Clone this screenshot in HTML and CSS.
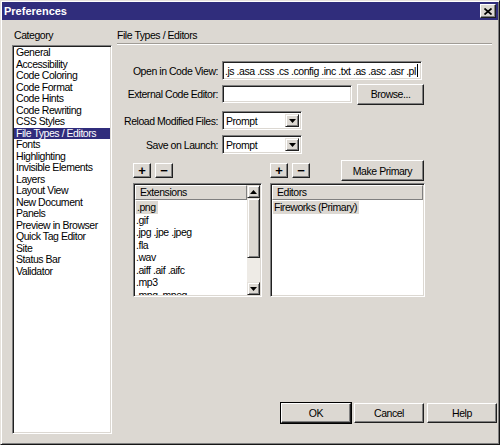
FILE: index.html
```html
<!DOCTYPE html>
<html>
<head>
<meta charset="utf-8">
<title>Preferences</title>
<link rel="stylesheet" href="styles.css">
</head>
<body>
<div class="window">
  <div class="titlebar">
    <span class="title">Preferences</span>
    <span class="close"><svg width="8" height="7" viewBox="0 0 8 7"><path d="M0.5 0.5L7.5 6.5M7.5 0.5L0.5 6.5" stroke="#000" stroke-width="1.7"/></svg></span>
  </div>
  <div class="main">
    <div class="left">
      <div class="cat-label">Category</div>
      <ul class="cat-list">
        <li>General</li>
        <li>Accessibility</li>
        <li>Code Coloring</li>
        <li>Code Format</li>
        <li>Code Hints</li>
        <li>Code Rewriting</li>
        <li>CSS Styles</li>
        <li class="sel">File Types / Editors</li>
        <li>Fonts</li>
        <li>Highlighting</li>
        <li>Invisible Elements</li>
        <li>Layers</li>
        <li>Layout View</li>
        <li>New Document</li>
        <li>Panels</li>
        <li>Preview in Browser</li>
        <li>Quick Tag Editor</li>
        <li>Site</li>
        <li>Status Bar</li>
        <li>Validator</li>
      </ul>
    </div>
    <div class="right">
      <div class="heading">File Types / Editors</div>
      <div class="sep"></div>
      <div class="form">
        <div class="row r1">
          <span class="lbl">Open in Code View:</span>
          <div class="field f-code"><span class="val">.js .asa .css .cs .config .inc .txt .as .asc .asr .pl</span><span class="caret"></span></div>
        </div>
        <div class="row r2">
          <span class="lbl">External Code Editor:</span>
          <div class="field f-ext"></div>
          <button class="btn browse">Browse...</button>
        </div>
        <div class="row r3">
          <span class="lbl">Reload Modified Files:</span>
          <div class="field select"><span class="val">Prompt</span><span class="drop"><svg width="7" height="4" viewBox="0 0 7 4"><path d="M0 0h7L3.5 4z" fill="#000"/></svg></span></div>
        </div>
        <div class="row r4">
          <span class="lbl">Save on Launch:</span>
          <div class="field select"><span class="val">Prompt</span><span class="drop"><svg width="7" height="4" viewBox="0 0 7 4"><path d="M0 0h7L3.5 4z" fill="#000"/></svg></span></div>
        </div>
      </div>
      <div class="tools">
        <div class="tgroup tleft">
          <button class="btn pm">+</button>
          <button class="btn pm">&minus;</button>
        </div>
        <div class="tgroup tright">
          <button class="btn pm">+</button>
          <button class="btn pm">&minus;</button>
          <button class="btn primary">Make Primary</button>
        </div>
      </div>
      <div class="lists">
        <div class="listbox lb-ext">
          <div class="lb-body">
            <div class="lb-head">Extensions</div>
            <div class="lb-item"><span class="hl">.png</span></div>
            <div class="lb-item">.gif</div>
            <div class="lb-item">.jpg .jpe .jpeg</div>
            <div class="lb-item">.fla</div>
            <div class="lb-item">.wav</div>
            <div class="lb-item">.aiff .aif .aifc</div>
            <div class="lb-item">.mp3</div>
            <div class="lb-item">.mpg .mpeg</div>
          </div>
          <div class="scrollbar">
            <div class="sb-btn"><svg width="7" height="4" viewBox="0 0 7 4"><path d="M0 4h7L3.5 0z" fill="#000"/></svg></div>
            <div class="sb-thumb"></div>
            <div class="sb-track"></div>
            <div class="sb-btn"><svg width="7" height="4" viewBox="0 0 7 4"><path d="M0 0h7L3.5 4z" fill="#000"/></svg></div>
          </div>
        </div>
        <div class="listbox lb-ed">
          <div class="lb-body">
            <div class="lb-head">Editors</div>
            <div class="lb-item"><span class="hl">Fireworks (Primary)</span></div>
          </div>
        </div>
      </div>
      <div class="buttons">
        <button class="btn dlg default">OK</button>
        <button class="btn dlg">Cancel</button>
        <button class="btn dlg">Help</button>
      </div>
    </div>
  </div>
</div>
</body>
</html>
```
FILE: styles.css
```css
html, body {
  margin: 0;
  padding: 0;
  background: #dcd8d2;
}

body {
  font-family: "Liberation Sans", Arial, sans-serif;
  font-size: 10.5px;
  letter-spacing: -0.45px;
  color: #000;
}

.window {
  width: 500px;
  height: 445px;
  box-sizing: border-box;
  border: 1px solid;
  border-color: #e6e2dc #161616 #161616 #e6e2dc;
  padding: 1px;
  background: #dcd8d2;
  box-shadow: inset 1px 1px #fff, inset -1px -1px #808080;
  display: flex;
  flex-direction: column;
}

.titlebar {
  height: 18px;
  flex: none;
  background: #302d7c;
  display: flex;
  align-items: center;
  justify-content: space-between;
  padding: 0 2px 0 2px;
  color: #fff;
  font-weight: bold;
  font-size: 11px;
  letter-spacing: 0;
}

.close {
  width: 14px;
  height: 12px;
  background: #dcd8d2;
  border: 1px solid;
  border-color: #fff #202020 #202020 #fff;
  box-shadow: inset -1px -1px #808080;
  display: flex;
  align-items: center;
  justify-content: center;
}

.main {
  flex: 1;
  display: flex;
  gap: 5px;
  padding: 0 0 9px 10px;
  min-height: 0;
}

.left {
  width: 100px;
  display: flex;
  flex-direction: column;
}

.cat-label {
  margin: 9px 0 3px 2px;
  line-height: 13px;
  height: 13px;
}

.cat-list {
  flex: 1;
  margin: 0;
  padding: 1px;
  list-style: none;
  background: #fff;
  border: 1px solid;
  border-color: #808080 #fff #fff #808080;
  box-shadow: inset 1px 1px #202020, inset -1px -1px #dcd8d2;
}

.cat-list li {
  line-height: 11.5px;
  height: 11.5px;
  padding-left: 2px;
  white-space: nowrap;
}

.cat-list li.sel {
  background: #302d7c;
  color: #fff;
}

.right {
  flex: 1;
  display: flex;
  flex-direction: column;
  padding-right: 1px;
}

.heading {
  margin-top: 9px;
  line-height: 13px;
  height: 13px;
}

.sep {
  height: 0;
  border-top: 1px solid #a09c96;
  border-bottom: 1px solid #fff;
  margin: 1px 5px 0 0;
}

.form {
  margin-top: 16px;
}

.row {
  display: flex;
  align-items: center;
}

.lbl {
  width: 101px;
  padding-right: 4px;
  text-align: right;
  white-space: nowrap;
  flex: none;
}

.r1 { height: 19px; }
.r2 { height: 22px; margin-top: 3px; }
.r3 { height: 19px; margin-top: 6px; }
.r4 { height: 19px; margin-top: 5px; }

.field {
  box-sizing: border-box;
  background: #fff;
  border: 1px solid;
  border-color: #808080 #fff #fff #808080;
  box-shadow: inset 1px 1px #202020, inset -1px -1px #dcd8d2;
  display: flex;
  align-items: center;
  overflow: hidden;
  white-space: nowrap;
}

.field .val {
  padding-left: 3px;
}

.f-code {
  width: 200px;
  height: 19px;
}

.f-code .val {
  padding-left: 2px;
}

.caret {
  width: 1px;
  height: 13px;
  background: #000;
  flex: none;
  margin-left: 1px;
}

.f-ext {
  width: 130px;
  height: 18px;
}

.select {
  width: 80px;
  height: 19px;
  justify-content: space-between;
  padding-right: 2px;
}

.drop {
  width: 14px;
  height: 13px;
  box-sizing: border-box;
  background: #dcd8d2;
  border: 1px solid;
  border-color: #e6e2dc #202020 #202020 #e6e2dc;
  box-shadow: inset 1px 1px #fff, inset -1px -1px #808080;
  display: flex;
  align-items: center;
  justify-content: center;
}

.btn {
  font-family: inherit;
  font-size: 10.5px;
  letter-spacing: -0.45px;
  color: #000;
  background: #dcd8d2;
  border: 1px solid;
  border-color: #fff #202020 #202020 #fff;
  box-shadow: inset -1px -1px #808080;
  padding: 0;
  margin: 0;
  box-sizing: border-box;
  display: flex;
  align-items: center;
  justify-content: center;
}

.browse {
  width: 67px;
  height: 21px;
  margin-left: 5px;
}

.tools {
  display: flex;
  margin-top: 6px;
  height: 21px;
  padding-left: 16px;
}

.tgroup {
  display: flex;
  align-items: flex-start;
  gap: 4px;
}

.tleft { width: 129px; }

.tright {
  width: 155px;
  margin-left: 8px;
}

.pm {
  width: 18px;
  height: 15px;
  margin-top: 3px;
  font-weight: bold;
  font-size: 13px;
  line-height: 13px;
  letter-spacing: 0;
}

.primary {
  width: 83px;
  height: 21px;
  margin-left: auto;
  margin-right: 1px;
}

.lists {
  display: flex;
  margin-top: 2px;
  height: 114px;
  padding-left: 16px;
}

.listbox {
  box-sizing: border-box;
  height: 114px;
  background: #fff;
  border: 1px solid;
  border-color: #808080 #fff #fff #808080;
  box-shadow: inset 1px 1px #202020, inset -1px -1px #dcd8d2;
  padding: 1px;
  display: flex;
}

.lb-ext { width: 129px; }

.lb-ed {
  width: 155px;
  margin-left: 8px;
}

.lb-body {
  flex: 1;
  overflow: hidden;
  white-space: nowrap;
}

.lb-head {
  height: 15px;
  box-sizing: border-box;
  background: #dcd8d2;
  border: 1px solid;
  border-color: #fff #808080 #808080 #fff;
  padding-left: 4px;
  line-height: 13px;
}

.lb-item {
  height: 12.5px;
  line-height: 12.5px;
  padding-left: 1px;
}

.hl {
  background: #dcd8d2;
  padding: 0 2px 0 1px;
  display: inline-block;
}

.lb-head + .lb-item {
  margin-top: 1px;
}

.scrollbar {
  width: 13px;
  display: flex;
  flex-direction: column;
  background: #eeebe6;
}

.sb-btn {
  height: 13px;
  box-sizing: border-box;
  background: #dcd8d2;
  border: 1px solid;
  border-color: #e6e2dc #202020 #202020 #e6e2dc;
  box-shadow: inset 1px 1px #fff, inset -1px -1px #808080;
  display: flex;
  align-items: center;
  justify-content: center;
  flex: none;
}

.sb-thumb {
  height: 60px;
  box-sizing: border-box;
  background: #dcd8d2;
  border: 1px solid;
  border-color: #e6e2dc #202020 #202020 #e6e2dc;
  box-shadow: inset 1px 1px #fff, inset -1px -1px #808080;
  flex: none;
}

.sb-track {
  flex: 1;
}

.buttons {
  margin-top: auto;
  margin-bottom: 11px;
  display: flex;
  justify-content: flex-end;
  gap: 3px;
}

.dlg {
  width: 70px;
  height: 20px;
}

.dlg.default {
  outline: 1px solid #000;
  outline-offset: 0;
}
```
